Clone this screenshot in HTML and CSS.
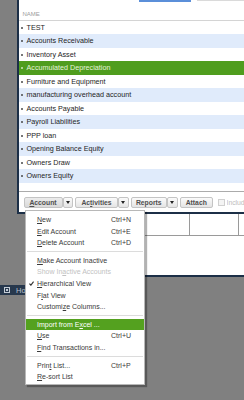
FILE: index.html
```html
<!DOCTYPE html>
<html lang="en">
<head>
  <meta charset="UTF-8">
  <meta name="viewport" content="width=device-width, initial-scale=1.0">
  <title>Chart of Accounts</title>
  <link rel="stylesheet" href="styles.css">
</head>
<body>
  <!-- chart of accounts window -->
  <div class="window">
    <div class="tabs">
      <span class="tab_on"></span>
      <span class="tab_off"></span>
    </div>
    <div class="list_head">NAME</div>
    <ul class="accounts">
      <li>TEST</li>
      <li>Accounts Receivable</li>
      <li>Inventory Asset</li>
      <li class="selected">Accumulated Depreciation</li>
      <li>Furniture and Equipment</li>
      <li>manufacturing overhead account</li>
      <li>Accounts Payable</li>
      <li>Payroll Liabilities</li>
      <li>PPP loan</li>
      <li>Opening Balance Equity</li>
      <li>Owners Draw</li>
      <li>Owners Equity</li>
    </ul>
    <!-- bottom buttons -->
    <div class="toolbar">
      <div class="split">
        <span class="btn w_account pressed"><u>A</u>ccount</span>
        <span class="btn arrow"></span>
      </div>
      <div class="split">
        <span class="btn w_activities">Ac<u>t</u>ivities</span>
        <span class="btn arrow"></span>
      </div>
      <div class="split">
        <span class="btn w_reports">Reports</span>
        <span class="btn arrow"></span>
      </div>
      <span class="btn w_attach">Attach</span>
      <span class="checkbox"></span>
      <span class="include">Include inactive</span>
    </div>
  </div>

  <!-- window behind -->
  <div class="register">
    <div class="reg_head">
      <span class="cell c1"></span>
      <span class="cell c2"></span>
      <span class="cell c3"></span>
    </div>
  </div>

  <div class="nav_home">
    <svg width="6" height="6" viewBox="0 0 6 6">
      <rect x="0.5" y="0.5" width="5" height="5" fill="none" stroke="#c4ccd6" stroke-width="1"/>
      <rect x="2" y="2" width="2" height="2" fill="#c4ccd6"/>
    </svg>
    <span>Home</span>
  </div>

  <!-- Account dropdown -->
  <div class="menu">
    <div class="item"><span></span><span><u>N</u>ew</span><span class="key">Ctrl+N</span></div>
    <div class="item"><span></span><span><u>E</u>dit Account</span><span class="key">Ctrl+E</span></div>
    <div class="item"><span></span><span><u>D</u>elete Account</span><span class="key">Ctrl+D</span></div>
    <div class="sep"></div>
    <div class="item"><span></span><span><u>M</u>ake Account Inactive</span><span class="key"></span></div>
    <div class="item disabled"><span></span><span>Show In<u>a</u>ctive Accounts</span><span class="key"></span></div>
    <div class="item">
      <span class="check">
        <svg width="5" height="5" viewBox="0 0 5 5"><path d="M0.4 2.6 L1.9 4.2 L4.6 0.6" fill="none" stroke="#333" stroke-width="1.1"/></svg>
      </span>
      <span><u>H</u>ierarchical View</span><span class="key"></span>
    </div>
    <div class="item"><span></span><span>F<u>l</u>at View</span><span class="key"></span></div>
    <div class="item"><span></span><span>Customi<u>z</u>e Columns...</span><span class="key"></span></div>
    <div class="sep"></div>
    <div class="item active"><span></span><span>Import from E<u>x</u>cel ...</span><span class="key"></span></div>
    <div class="item"><span></span><span><u>U</u>se</span><span class="key">Ctrl+U</span></div>
    <div class="item"><span></span><span><u>F</u>ind Transactions in...</span><span class="key"></span></div>
    <div class="sep"></div>
    <div class="item"><span></span><span>Prin<u>t</u> List...</span><span class="key">Ctrl+P</span></div>
    <div class="item"><span></span><span><u>R</u>e-sort List</span><span class="key"></span></div>
  </div>
</body>
</html>
```
FILE: styles.css
```css
*{
  margin: 0;
  padding: 0;
  box-sizing: border-box;
}
body{
  position: relative;
  width: 244px;
  height: 400px;
  overflow: hidden;
  background-color: #808080;
  font-family: "Liberation Sans", Arial, sans-serif;
  color: #1e1e1e;
}
u{
  text-decoration-thickness: 0.5px;
  text-underline-offset: 1px;
}

/* main window */
.window{
  margin-left: 17px;
  height: 213.5px;
  overflow: hidden;
  background-color: #fff;
  border-left: 2.5px solid #1c2f47;
  border-bottom: 2px solid #1c2f47;
}
.tabs{
  display: flex;
  height: 8px;
  padding-left: 119.5px;
}
.tabs .tab_on{
  width: 52px;
  height: 1.5px;
  background-color: #5b8fd9;
}
.tabs .tab_off{
  flex: 1;
  margin-left: 6px;
  height: 1px;
  background-color: #dadada;
}
.list_head{
  height: 12.5px;
  padding: 3px 0 0 3.5px;
  border-bottom: 1px solid #d4d4d4;
  font-size: 6px;
  line-height: 6px;
  color: #9c9c9c;
}
.accounts{
  list-style: none;
}
.accounts li{
  height: 13.5px;
  padding-left: 1.5px;
  font-size: 7.2px;
  line-height: 13.5px;
  white-space: nowrap;
}
.accounts li:nth-child(even){
  background-color: #e0ebfb;
}
.accounts li::before{
  content: "";
  display: inline-block;
  width: 2px;
  height: 2px;
  margin-right: 4px;
  vertical-align: middle;
  border-radius: 50%;
  background-color: #4a4a4a;
}
.accounts li.selected{
  background-color: #4f9d1e;
  color: #e6f3dc;
}
.accounts li.selected::before{
  background-color: #cfe6bf;
}

/* buttons row */
.toolbar{
  display: flex;
  align-items: flex-start;
  margin-top: 8.5px;
  height: 20.5px;
  padding: 4.5px 0 0 4.5px;
  overflow: hidden;
  border-top: 1.5px solid #ababab;
  white-space: nowrap;
}
.split{
  display: flex;
  margin-right: 2px;
}
.btn{
  display: flex;
  align-items: center;
  justify-content: center;
  flex-shrink: 0;
  height: 11.5px;
  border: 1px solid #c4c4c4;
  border-radius: 2px;
  background: linear-gradient(#fbfbfb, #e4e4e4);
  font-size: 6.8px;
  font-weight: 700;
  color: #4f4f4f;
}
.btn.pressed{
  background: linear-gradient(#ececec, #d9d9d9);
}
.w_account{
  width: 39px;
}
.w_activities{
  width: 43px;
}
.w_reports{
  width: 36.5px;
}
.w_attach{
  width: 33.5px;
}
.split .btn.arrow{
  width: 10.5px;
}
.btn.arrow::after{
  content: "";
  border-left: 2.5px solid transparent;
  border-right: 2.5px solid transparent;
  border-top: 3px solid #222;
}
.checkbox{
  flex-shrink: 0;
  width: 7px;
  height: 7px;
  margin: 2px 2px 0 4.5px;
  border: 1px solid #d0d0d0;
  background-color: #f4f4f4;
}
.include{
  min-width: 0;
  overflow: hidden;
  font-size: 6.8px;
  line-height: 11px;
  color: #bdbdbd;
}

/* window behind the menu */
.register{
  margin-left: 50px;
  height: 63.5px;
  background-color: #fff;
  border-bottom: 2px solid #1c2f47;
}
.reg_head{
  display: flex;
  height: 22.5px;
  border-bottom: 1px solid #9a9a9a;
}
.reg_head .cell{
  height: 100%;
  border-right: 1px solid #9a9a9a;
}
.reg_head .c1{
  width: 140px;
}
.reg_head .c2{
  width: 48.5px;
}
.reg_head .c3{
  flex: 1;
  border-right: 0;
}

.nav_home{
  display: flex;
  align-items: center;
  gap: 6px;
  margin-top: 8px;
  width: 60px;
  height: 10px;
  padding-left: 4px;
  background-color: #27384d;
  font-size: 7.5px;
  color: #b9c3ce;
}

/* Account dropdown menu */
.menu{
  position: absolute;
  top: 209.5px;
  left: 25px;
  width: 120px;
  padding: 3.5px 0 1px;
  border: 1px solid #b8b8b8;
  background-color: #fff;
  box-shadow: 2px 2px 1px rgba(0, 0, 0, .3);
}
.menu .item{
  display: grid;
  grid-template-columns: 11px 1fr 33px;
  height: 11.6px;
  font-size: 7px;
  line-height: 11.6px;
  color: #3a3a3a;
  white-space: nowrap;
}
.menu .item .check{
  display: flex;
  align-items: center;
  justify-content: center;
}
.menu .item.disabled{
  color: #c2c2c2;
}
.menu .item.active{
  background-color: #54a11f;
  color: #fff;
}
.menu .sep{
  position: relative;
  height: 6px;
}
.menu .sep::after{
  content: "";
  position: absolute;
  top: 2.5px;
  left: 1px;
  right: 1px;
  height: 1px;
  background-color: #dcdcdc;
}
```
